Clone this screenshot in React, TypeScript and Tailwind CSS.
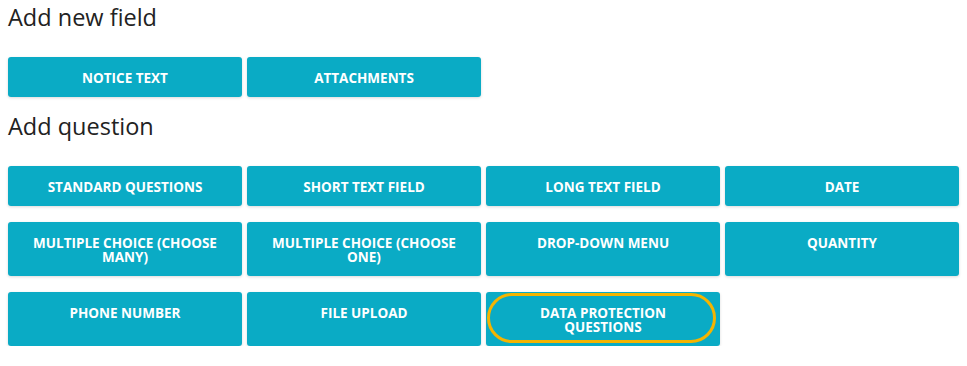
import React from 'react';

const fieldButtons = ['Notice text', 'Attachments'];

const questionButtons = [
  'Standard questions',
  'Short text field',
  'Long text field',
  'Date',
  'Multiple choice (choose many)',
  'Multiple choice (choose one)',
  'Drop-down menu',
  'Quantity',
  'Phone number',
  'File upload',
  'Data protection questions',
];

function AddButton({ label, focused }: { label: string; focused?: boolean }) {
  return (
    <button
      type="button"
      className="relative flex items-start justify-center rounded-[3px] bg-[#0aabc5] px-6 pt-[14px] pb-[12px] text-center text-[13.5px] font-bold uppercase leading-[14px] text-white shadow-[0_1px_3px_rgba(0,0,0,0.15)]"
    >
      <span>{label}</span>
      {focused && (
        <span className="pointer-events-none absolute top-[1px] right-[4px] bottom-[3px] left-[1px] rounded-full border-[3px] border-[#f5b400]" />
      )}
    </button>
  );
}

export default function App() {
  return (
    <div className="bg-white px-2 pt-[1px] font-['Open_Sans',sans-serif] text-[#222]">
      {/* New field section */}
      <h2 className="text-[23.5px] leading-8 font-normal">Add new field</h2>
      <div className="mt-6 grid grid-cols-4 gap-x-[5px] gap-y-4">
        {fieldButtons.map((label) => (
          <AddButton key={label} label={label} />
        ))}
      </div>

      {/* Question section */}
      <h2 className="mt-[13px] text-[23.5px] leading-8 font-normal">Add question</h2>
      <div className="mt-6 grid grid-cols-4 gap-x-[5px] gap-y-4">
        {questionButtons.map((label, i) => (
          <AddButton key={label} label={label} focused={i === questionButtons.length - 1} />
        ))}
      </div>
    </div>
  );
}
